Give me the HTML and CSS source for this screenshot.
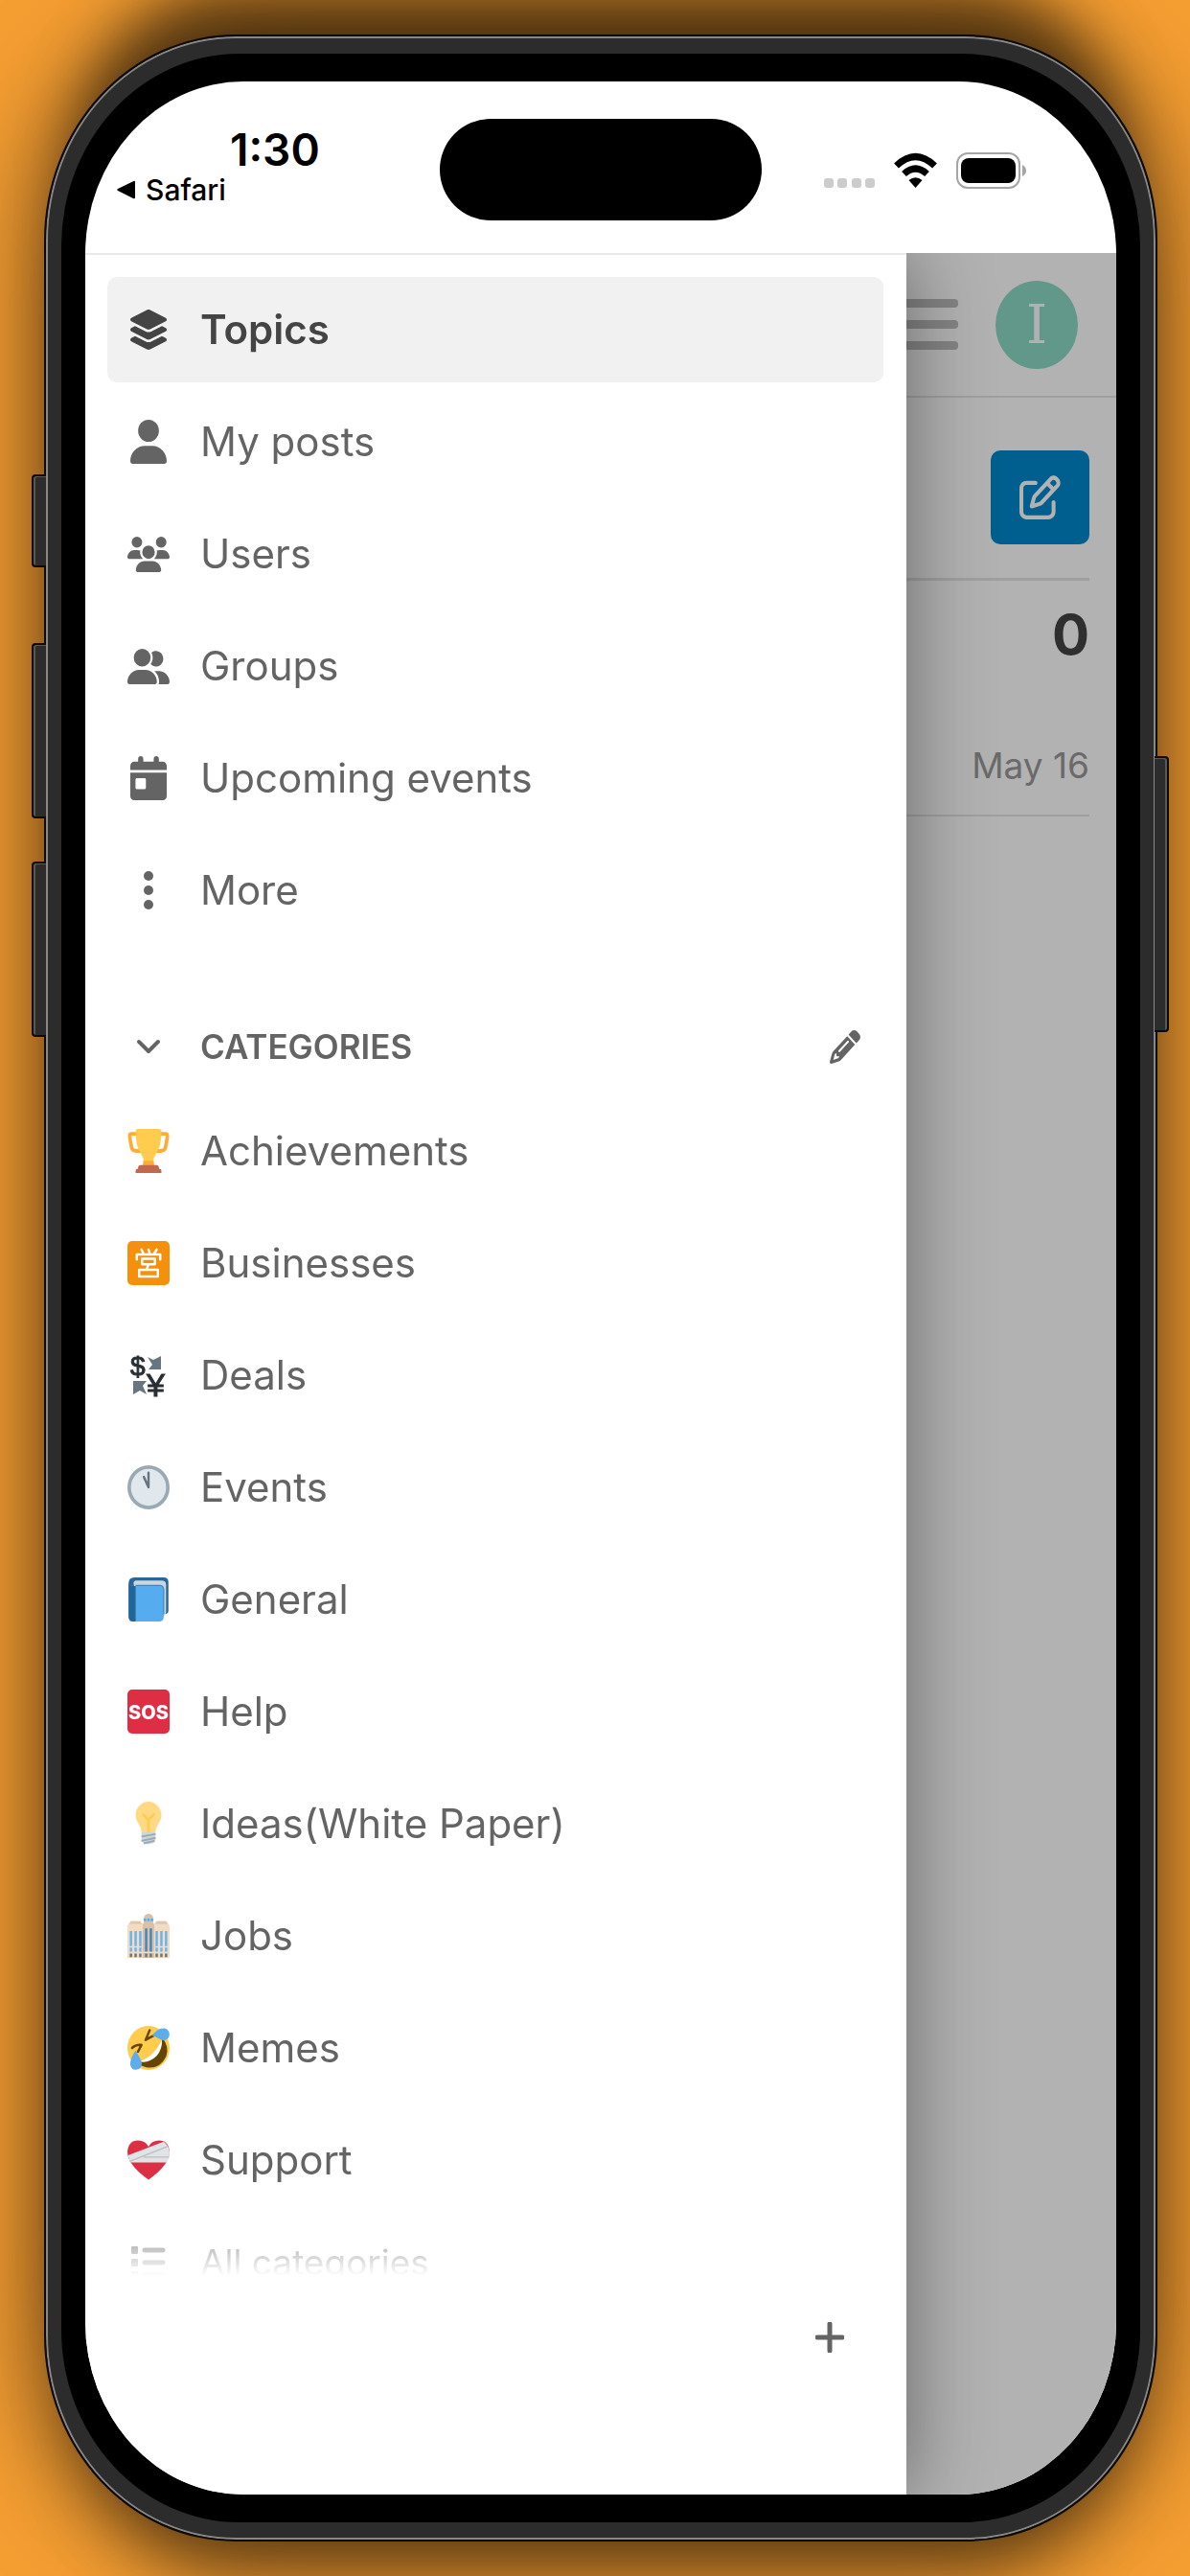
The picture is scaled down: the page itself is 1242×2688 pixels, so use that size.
FILE: index.html
```html
<!DOCTYPE html>
<html lang="en">
<head>
    <meta charset="UTF-8">
    <meta name="viewport" content="width=device-width, initial-scale=1.0">
    <title>Topics</title>
    <link rel="stylesheet" href="styles.css">
</head>
<body>
    <div class="phone">
        <span class="side-button action"></span>
        <span class="side-button volume-up"></span>
        <span class="side-button volume-down"></span>
        <span class="side-button power"></span>

        <div class="bezel">
            <div class="screen">
                <header class="status">
                    <div class="status-left">
                        <div class="time">1:30</div>
                        <a class="back" href="#">
                            <svg width="19" height="20" viewBox="0 0 19 20"><path d="M17.500 1Q19 0 19 2V18Q19 20 17 19L1 11Q-.5 10 1 9z"/></svg>
                            Safari
                        </a>
                    </div>
                    <div class="island"></div>
                    <div class="status-right">
                        <svg width="53" height="38" viewBox="0 0 53 38" fill="#ccc">
                            <rect x="0" y="27" width="10" height="10" rx="3"/>
                            <rect x="14" y="27" width="10" height="10" rx="3"/>
                            <rect x="29" y="27" width="10" height="10" rx="3"/>
                            <rect x="43" y="27" width="10" height="10" rx="3"/>
                        </svg>
                        <svg width="45" height="38" viewBox="0 0 45 38">
                            <g fill="none" stroke="#000" stroke-width="7">
                                <path d="M2.500 14Q22.500 -5 42.500 14"/>
                                <path d="M10.500 22.500Q22.500 11.500 34.500 22.500"/>
                            </g>
                            <path d="M15.500 29Q22.500 23.500 29.500 29L22.500 37z"/>
                        </svg>
                        <svg width="73" height="38" viewBox="0 0 73 38">
                            <rect x="1" y="1" width="65" height="36" rx="11" fill="none" stroke="#a5a5a5" stroke-width="2"/>
                            <rect x="5" y="6" width="57" height="26" rx="8"/>
                            <path d="M69 13Q73 15 73 19T69 25z" fill="#a5a5a5"/>
                        </svg>
                    </div>
                </header>

                <div class="app">
                    <aside class="sidebar">
                        <div class="sidebar-scroll">
                            <nav>
                                <ul class="links">
                                    <li><a class="row active" href="#">
                                        <svg class="icon" width="38" height="42" viewBox="32 0 512 512" preserveAspectRatio="none"><path d="M264.500 5.200c14.900-6.900 32.100-6.900 47 0l218.600 101c8.500 3.900 13.900 12.400 13.900 21.800s-5.400 17.900-13.900 21.800l-218.600 101c-14.900 6.900-32.100 6.900-47 0L45.900 149.800C37.400 145.800 32 137.300 32 128s5.400-17.900 13.900-21.800L264.500 5.200zM476.900 209.600l53.200 24.600c8.500 3.900 13.900 12.400 13.900 21.800s-5.400 17.900-13.900 21.800l-218.600 101c-14.900 6.900-32.100 6.900-47 0L45.900 277.800C37.400 273.800 32 265.300 32 256s5.400-17.900 13.900-21.800l53.200-24.600 152 70.200c23.400 10.800 50.400 10.800 73.800 0l152-70.200zm-152 198.200l152-70.200 53.200 24.600c8.500 3.900 13.900 12.400 13.900 21.800s-5.400 17.900-13.900 21.800l-218.600 101c-14.900 6.900-32.100 6.900-47 0L45.900 405.800C37.400 401.800 32 393.300 32 384s5.400-17.900 13.900-21.800l53.200-24.600 152 70.200c23.400 10.800 50.400 10.800 73.800 0z"/></svg>
                                        Topics
                                    </a></li>
                                    <li><a class="row" href="#">
                                        <svg class="icon" width="38" height="46" viewBox="0 0 448 512" preserveAspectRatio="none"><path d="M224 256A128 128 0 1 0 224 0a128 128 0 1 0 0 256zm-45.700 48C79.800 304 0 383.800 0 482.300C0 498.700 13.300 512 29.700 512l388.600 0c16.400 0 29.700-13.300 29.700-29.700C448 383.800 368.200 304 269.700 304l-91.400 0z"/></svg>
                                        My posts
                                    </a></li>
                                    <li><a class="row" href="#">
                                        <svg class="icon" width="44" height="37" viewBox="0 0 640 512" preserveAspectRatio="none"><path d="M144 0a80 80 0 1 1 0 160A80 80 0 1 1 144 0zM512 0a80 80 0 1 1 0 160A80 80 0 1 1 512 0zM0 298.700C0 239.800 47.800 192 106.700 192h42.700c15.900 0 31 3.500 44.600 9.700c-1.300 7.200-1.900 14.700-1.900 22.300c0 38.200 16.800 72.500 43.300 96c-.2 0-.4 0-.7 0H21.300C9.600 320 0 310.400 0 298.700zM405.300 320c-.2 0-.4 0-.7 0c26.600-23.500 43.300-57.800 43.300-96c0-7.600-.7-15-1.900-22.300c13.600-6.300 28.700-9.700 44.600-9.700h42.700C592.200 192 640 239.800 640 298.700c0 11.800-9.600 21.300-21.300 21.300H405.300zM224 224a96 96 0 1 1 192 0 96 96 0 1 1 -192 0zM128 485.300C128 411.700 187.700 352 261.300 352H378.700C452.300 352 512 411.700 512 485.300c0 14.700-11.900 26.700-26.700 26.700H154.700c-14.700 0-26.700-11.900-26.700-26.700z"/></svg>
                                        Users
                                    </a></li>
                                    <li><a class="row" href="#">
                                        <svg class="icon" width="44" height="37" viewBox="0 0 640 512" preserveAspectRatio="none"><path d="M96 128a128 128 0 1 1 256 0A128 128 0 1 1 96 128zM0 482.300C0 383.800 79.800 304 178.300 304h91.400C368.200 304 448 383.800 448 482.300c0 16.400-13.300 29.700-29.700 29.700H29.700C13.300 512 0 498.700 0 482.300zM609.300 512H471.400c5.400-9.400 8.600-20.300 8.600-32v-8c0-60.700-27.100-115.200-69.800-151.800c2.400-.1 4.700-.2 7.100-.2h61.400C567.800 320 640 392.200 640 481.300c0 17-13.800 30.700-30.700 30.700zM432 256c-31 0-59-12.600-79.300-32.900C372.400 196.500 384 163.600 384 128c0-26.800-6.600-52.100-18.300-74.300C384.300 40.100 407.200 32 432 32c61.900 0 112 50.100 112 112s-50.100 112-112 112z"/></svg>
                                        Groups
                                    </a></li>
                                    <li><a class="row" href="#">
                                        <svg class="icon" width="38" height="46" viewBox="0 0 448 512" preserveAspectRatio="none"><path d="M128 0c17.700 0 32 14.300 32 32V64H288V32c0-17.700 14.300-32 32-32s32 14.300 32 32V64h48c26.500 0 48 21.500 48 48v48H0V112C0 85.500 21.500 64 48 64H96V32c0-17.700 14.300-32 32-32zM0 192H448V464c0 26.500-21.500 48-48 48H48c-26.500 0-48-21.500-48-48V192zm80 64c-8.800 0-16 7.200-16 16v96c0 8.800 7.200 16 16 16h96c8.800 0 16-7.200 16-16V272c0-8.800-7.200-16-16-16H80z"/></svg>
                                        Upcoming events
                                    </a></li>
                                    <li><button class="row" type="button">
                                        <svg class="icon" width="10" height="40" viewBox="0 0 10 40"><circle cx="5" cy="5" r="5"/><circle cx="5" cy="20" r="5"/><circle cx="5" cy="35" r="5"/></svg>
                                        More
                                    </button></li>
                                </ul>

                                <div class="section-header">
                                    <button class="section-toggle" type="button">
                                        <svg class="icon" width="26" height="16" viewBox="0 0 26 16"><path d="M3 3L13 13L23 3" fill="none" stroke="currentColor" stroke-width="4" stroke-linecap="round" stroke-linejoin="round"/></svg>
                                        CATEGORIES
                                    </button>
                                    <button class="icon-button" type="button" aria-label="Edit categories">
                                        <svg width="32" height="35" viewBox="0 0 512 512" preserveAspectRatio="none"><path d="M410.300 231l11.300-11.300-33.900-33.900-62.100-62.100L291.700 89.800l-11.300 11.300-22.600 22.600L58.600 322.900c-10.400 10.400-18 23.300-22.200 37.400L1 480.700c-2.500 8.400-.2 17.500 6.100 23.700s15.300 8.500 23.700 6.100l120.300-35.400c14.100-4.200 27-11.800 37.400-22.200L387.700 253.700 410.300 231zM160 399.400l-9.100 22.700c-4 3.100-8.500 5.400-13.300 6.900L59.400 452l23-78.100c1.400-4.900 3.800-9.400 6.900-13.300l22.700-9.100v32c0 8.800 7.200 16 16 16h32zM362.700 18.700L348.300 33.200 325.700 55.800 314.300 67.100l33.900 33.900 62.100 62.100 33.900 33.900 11.300-11.300 22.600-22.600 14.500-14.500c25-25 25-65.500 0-90.500L453.300 18.700c-25-25-65.500-25-90.500 0zm-47.400 168l-144 144c-6.200 6.200-16.400 6.200-22.600 0s-6.200-16.400 0-22.600l144-144c6.200-6.200 16.400-6.200 22.600 0s6.200 16.400 0 22.600z"/></svg>
                                    </button>
                                </div>

                                <ul class="links">
                                    <li><a class="row" href="#">
                                        <svg class="icon" width="44" height="46" viewBox="0 0 36 36" preserveAspectRatio="none">
                                            <path d="M3 4H10L12 18H8Q4 18 3.500 15L2 7Q1.500 4 3 4zM33 4H26L24 18H28Q32 18 32.500 15L34 7Q34.500 4 33 4z" fill="none" stroke="#ffac33" stroke-width="3"/>
                                            <path d="M14 23H22L23 31H13z" fill="#ffac33"/>
                                            <path d="M9 0H27Q29 0 29 2Q29 15 24 21Q22 24 22 26H14Q14 24 12 21Q7 15 7 2Q7 0 9 0z" fill="#ffcc4d"/>
                                            <path d="M11 29.500H25Q27 29.500 27 32.500Q29 32.500 29 34V36H7V34Q7 32.500 9 32.500Q9 29.500 11 29.500z" fill="#c1694f"/>
                                        </svg>
                                        Achievements
                                    </a></li>
                                    <li><a class="row" href="#">
                                        <svg class="icon" width="44" height="46" viewBox="0 0 36 36" preserveAspectRatio="none">
                                            <rect width="36" height="36" rx="4" fill="#f4900c"/>
                                            <g fill="none" stroke="#fff" stroke-width="2" stroke-linejoin="round" stroke-linecap="round">
                                                <path d="M8 15V11H28V15M12 7L13.500 10M18 7L19 10M25 7L23 10M12.500 14.500H23.500V19H12.500zM18 19L16.500 23M10 23.500H26V29H10z"/>
                                            </g>
                                        </svg>
                                        Businesses
                                    </a></li>
                                    <li><a class="row" href="#">
                                        <svg class="icon" width="44" height="46" viewBox="0 0 44 46">
                                            <path d="M21 4L27 7L35 3V17H22L26 12zM6 29H20L16 34L20 43L13 39L6 43z" fill="#66757f"/>
                                            <text class="sign" x="3" y="23" font-size="28">$</text>
                                            <text class="sign" x="20" y="45" font-size="34">¥</text>
                                        </svg>
                                        Deals
                                    </a></li>
                                    <li><a class="row" href="#">
                                        <svg class="icon" width="44" height="46" viewBox="0 0 36 36" preserveAspectRatio="none">
                                            <circle cx="18" cy="18" r="16.500" fill="#e1e8ed" stroke="#9aaab4" stroke-width="3"/>
                                            <path d="M18 6V18L14 9.500" fill="none" stroke="#66757f" stroke-width="2" stroke-linecap="round" stroke-linejoin="round"/>
                                        </svg>
                                        Events
                                    </a></li>
                                    <li><a class="row" href="#">
                                        <svg class="icon" width="44" height="46" viewBox="0 0 36 36" preserveAspectRatio="none">
                                            <path d="M6 0H31Q35 0 35 4V27Q35 30 32 30H1V5Q1 0 6 0z" fill="#2a6797"/>
                                            <path d="M7 2.500H29Q33 2.500 33 6V29L30 33L6 8Q4 3 7 2.500z" fill="#ccd6dd"/>
                                            <path d="M1 5Q3 7 6 7H27Q31 7 31 10V32Q31 36 27 36H5Q1 36 1 32z" fill="#55acee"/>
                                            <path d="M1 5Q3 7 7 7V36H5Q1 36 1 32z" fill="#226699"/>
                                            <path d="M7 6.500H28Q31 7 31 10V30" fill="none" stroke="#3b88c3"/>
                                        </svg>
                                        General
                                    </a></li>
                                    <li><a class="row" href="#">
                                        <svg class="icon" width="44" height="46" viewBox="0 0 44 46">
                                            <rect width="44" height="46" rx="5" fill="#dd2e44"/>
                                            <text class="sos" x="22" y="31" text-anchor="middle">SOS</text>
                                        </svg>
                                        Help
                                    </a></li>
                                    <li><a class="row" href="#">
                                        <svg class="icon" width="44" height="46" viewBox="0 0 36 36" preserveAspectRatio="none">
                                            <path d="M18 0C12 0 7 5 7 11C7 17 12 19 12 25H24C24 19 29 17 29 11C29 5 24 0 18 0z" fill="#ffd983"/>
                                            <path d="M13.500 10.500L18 15L22.500 10.500M18 15V25" fill="none" stroke="#ffcc4d" stroke-width="2" stroke-linecap="round"/>
                                            <path d="M12 25H24V32L22 34H20L18 35L16 34H14L12 32z" fill="#ccd6dd"/>
                                            <path d="M12 28.500L24 26.500M12 32L24 29.500M14 34L23 32" stroke="#99aab5" stroke-width="1.500"/>
                                        </svg>
                                        Ideas(White Paper)
                                    </a></li>
                                    <li><a class="row" href="#">
                                        <svg class="icon" width="44" height="46" viewBox="0 0 36 36" preserveAspectRatio="none">
                                            <path d="M0 11Q0 8 3 8V6H11V8H13V36H0zM23 8H25V6H33V8Q36 8 36 11V36H23z" fill="#f3dcc3"/>
                                            <path d="M3 6H11L13 8.500H1zM25 6H33L35 8.500H23z" fill="#e0c7ad"/>
                                            <path d="M13 9L14 7V3Q15 0 18 0T22 3V7L23 9V36H13z" fill="#d9c0a7"/>
                                            <path d="M14 5H22" stroke="#55acee" stroke-width="2" stroke-dasharray="2 1"/>
                                            <g stroke="#66b5f0" stroke-width="2">
                                                <path d="M3 14V32M7 14V32M11 14V32M25 14V32M29 14V32M33 14V32"/>
                                                <path d="M16 12V32M20 12V32" stroke="#3b88c3"/>
                                            </g>
                                            <path d="M2 34H12M15 34H21M24 34H34" stroke="#66757f" stroke-width="3" stroke-dasharray="2 2"/>
                                            <path d="M1 27H12M24 27H35M1 31.500H35" stroke="#f3dcc3"/>
                                        </svg>
                                        Jobs
                                    </a></li>
                                    <li><a class="row" href="#">
                                        <svg class="icon" width="44" height="46" viewBox="0 0 36 36" preserveAspectRatio="none">
                                            <circle cx="18" cy="18" r="18" fill="#ffcc4d"/>
                                            <path d="M30 10Q36 17 33 25Q28 35 17 34Q11 33 9 30Q23 26 30 10z" fill="#664500"/>
                                            <path d="M29.500 11Q22 26 10 29Q18 31 25 24.500Q30 19 29.500 11z" fill="#fff"/>
                                            <path d="M19 3.500L15.500 11.500L23 7.500M4 18Q7 15 12 15.500L9 21" fill="none" stroke="#664500" stroke-width="2" stroke-linecap="round" stroke-linejoin="round"/>
                                            <path d="M21 8Q26 1 32 2Q37 4 35.500 9Q33 13 28 11Q24 8.500 21 8zM7 20Q2 27 2.500 32Q4 37 9 35.500Q13 34 12 29Q10 25 7 20z" fill="#5dadec"/>
                                        </svg>
                                        Memes
                                    </a></li>
                                    <li><a class="row" href="#">
                                        <svg class="icon" width="44" height="46" viewBox="0 0 36 36" preserveAspectRatio="none">
                                            <path d="M18 34Q0 22 0 11Q1 2 9 2Q15 2 18 7Q21 2 27 2Q35 2 36 11Q36 22 18 34z" fill="#dd2e44"/>
                                            <path d="M.5 14L31 3Q36 7 36 12Q36 17 33 20H3Q1 17 .5 14z" fill="#e1e4e6"/>
                                            <path d="M2 19L34 7M14 15.500H35.500" stroke="#b9bec2" fill="none"/>
                                        </svg>
                                        Support
                                    </a></li>
                                </ul>
                                <a class="row all-categories" href="#">
                                    <svg class="icon" width="36" height="34" viewBox="0 0 36 34">
                                        <path d="M1 1h5v6h-5zM1 14h5v6h-5zM1 27h5v6h-5z" stroke="currentColor" stroke-width="2" stroke-linejoin="round"/>
                                        <path d="M14 4H33M14 17H33M14 30H33" stroke="currentColor" stroke-width="5" stroke-linecap="round"/>
                                    </svg>
                                    All categories
                                </a>
                            </nav>
                        </div>
                        <footer class="sidebar-footer">
                            <button class="icon-button" type="button" aria-label="Add section">
                                <svg width="30" height="32" viewBox="0 0 30 32"><path d="M15 2V30M2 16H28" stroke="currentColor" stroke-width="5" stroke-linecap="round"/></svg>
                            </button>
                        </footer>
                    </aside>

                    <main class="page">
                        <div class="topbar">
                            <button class="menu" type="button" aria-label="Menu">
                                <svg width="64" height="54" viewBox="0 0 64 54" fill="#bdbdbd">
                                    <rect width="64" height="9" rx="4"/><rect y="22" width="64" height="9" rx="4"/><rect y="44" width="64" height="9" rx="4"/>
                                </svg>
                            </button>
                            <a class="avatar" href="#">I</a>
                        </div>
                        <div class="content">
                            <div class="controls">
                                <button class="compose" type="button" aria-label="New topic">
                                    <svg width="43" height="46" viewBox="0 0 512 512" preserveAspectRatio="none"><path d="M441 58.900L453.100 71c9.400 9.400 9.400 24.600 0 33.900L424 134.100 377.900 88 407 58.900c9.400-9.400 24.600-9.400 33.900 0zM209.800 256.200L344 121.900 390.100 168 255.800 302.200c-2.900 2.900-6.500 5-10.400 6.100l-58.500 16.700 16.700-58.500c1.100-3.900 3.200-7.500 6.100-10.400zM373.100 25L175.800 222.200c-8.700 8.700-15 19.400-18.300 31.100l-28.600 100c-2.400 8.400-.1 17.400 6.100 23.600s15.200 8.500 23.600 6.100l100-28.600c11.800-3.400 22.500-9.700 31.100-18.300L487 138.900c28.100-28.100 28.100-73.700 0-101.800L474.900 25C446.800-3.100 401.200-3.100 373.100 25zM88 64C39.400 64 0 103.400 0 152V424c0 48.600 39.400 88 88 88H360c48.600 0 88-39.400 88-88V312c0-13.300-10.700-24-24-24s-24 10.700-24 24V424c0 22.100-17.900 40-40 40H88c-22.100 0-40-17.900-40-40V152c0-22.100 17.900-40 40-40H200c13.300 0 24-10.700 24-24s-10.700-24-24-24H88z"/></svg>
                                </button>
                            </div>
                            <div class="topic">
                                <span class="replies">0</span>
                                <span class="date">May 16</span>
                            </div>
                        </div>
                    </main>
                </div>
            </div>
        </div>
    </div>
</body>
</html>
```
FILE: styles.css
```css
* {
    box-sizing: border-box;
}

body {
    margin: 0;
    padding: 36px 34px 36px 46px;
    min-height: 100vh;
    display: flex;
    background-color: #f59e32;
    font-family: Inter, "Liberation Sans", sans-serif;
    font-size: 42px;
    color: #646464;
    overflow-x: hidden;
}

a {
    color: inherit;
    text-decoration: none;
}

button {
    padding: 0;
    border: none;
    background: none;
    font: inherit;
    color: inherit;
    cursor: pointer;
}

ul {
    margin: 0;
    padding: 0;
    list-style: none;
}

svg {
    display: block;
    flex: none;
}

.icon-button svg, .icon {
    fill: currentColor;
}

/* phone body */
.phone {
    position: relative;
    flex: 1;
    display: flex;
    padding: 18px 16px;
    border: 2px solid #0c0a08;
    border-radius: 200px / 215px;
    background-color: #2c2c2c;
    box-shadow:
        inset 0 0 0 2px #8a8785,
        0 0 110px rgba(0, 0, 0, 0.62),
        0 -90px 60px -40px rgba(0, 0, 0, 0.5),
        0 70px 70px -40px rgba(0, 0, 0, 0.4);
}

.side-button {
    position: absolute;
    left: -15px;
    width: 15px;
    border: 2px solid #0c0a08;
    border-right: none;
    border-radius: 4px 0 0 4px;
    background-color: #2c2c2c;
    box-shadow: inset 2px 1px 0 #5a5856;
}

.action {
    top: 457px;
    height: 97px;
}

.volume-up {
    top: 633px;
    height: 183px;
}

.volume-down {
    top: 861px;
    height: 183px;
}

.power {
    left: auto;
    right: -14px;
    top: 751px;
    height: 288px;
    border: 2px solid #0c0a08;
    border-left: none;
    border-radius: 0 4px 4px 0;
    box-shadow: inset -2px 1px 0 #5a5856;
}

.bezel {
    flex: 1;
    display: flex;
    padding: 29px 25px;
    border-radius: 186px / 201px;
    background-color: black;
}

.screen {
    flex: 1;
    min-width: 0;
    display: flex;
    flex-direction: column;
    border-radius: 165px / 180px;
    background-color: white;
    overflow: hidden;
}

/* status bar */
.status {
    display: grid;
    grid-template-columns: 1fr auto 1fr;
    min-height: 179px;
    color: black;
}

.status-left {
    padding: 43px 0 0 33px;
}

.time {
    padding-left: 118px;
    font-size: 46px;
    font-weight: 600;
    line-height: 56px;
}

.back {
    display: flex;
    align-items: center;
    gap: 11px;
    font-size: 30px;
    font-weight: 500;
    line-height: 28px;
}

.island {
    width: 336px;
    height: 106px;
    margin-top: 39px;
    border-radius: 53px;
    background-color: black;
}

.status-right {
    display: flex;
    justify-content: flex-end;
    gap: 20px;
    padding: 74px 94px 0 0;
}

/* sidebar */
.app {
    flex: 1;
    display: grid;
    grid-template-columns: 1fr 219px;
    overflow: hidden;
}

.sidebar {
    position: relative;
    z-index: 1;
    display: flex;
    flex-direction: column;
    border-top: 2px solid #e9e9e9;
    background-color: white;
    box-shadow: 0 0 80px rgba(0, 0, 0, 0.43);
}

.sidebar-scroll {
    flex: 1 1 0;
    min-height: 0;
    padding: 23px 24px 0 23px;
    overflow: hidden;
    mask-image: linear-gradient(to top, transparent, black 75px);
}

.links {
    display: flex;
    flex-direction: column;
    gap: 7px;
}

/* icons differ in width, so each one is centred in the same 44px column */
.row, .section-toggle {
    display: grid;
    grid-template-columns: 44px 1fr;
    align-items: center;
    column-gap: 32px;
    padding-left: 21px;
    text-align: left;
}

.row {
    width: 100%;
    height: 110px;
    border-radius: 10px;
    line-height: 56px;
}

.row.active {
    background-color: #f1f1f1;
    color: #444;
    font-weight: 600;
}

.icon {
    margin: 0 auto;
}

.section-header {
    display: flex;
    align-items: center;
    justify-content: space-between;
    height: 108px;
    margin-top: 54px;
    padding-right: 24px;
}

.section-toggle {
    font-size: 35px;
    font-weight: 600;
}

.all-categories {
    height: 104px;
    font-size: 37px;
}

.sidebar-footer {
    display: flex;
    align-items: flex-start;
    justify-content: flex-end;
    height: 228px;
    padding: 48px 65px 0 0;
}

.sign {
    font-family: "Liberation Sans", sans-serif;
    fill: #292f33;
    stroke: #292f33;
    stroke-width: 1px;
}

.sos {
    font-size: 20px;
    font-weight: 800;
    fill: white;
}

/* page behind the sidebar */
.page {
    position: relative;
    min-width: 0;
    background-color: white;
}

.page::after {
    content: "";
    position: absolute;
    inset: 0;
    background-color: rgba(0, 0, 0, 0.3);
}

.topbar {
    display: flex;
    align-items: center;
    justify-content: flex-end;
    gap: 39px;
    height: 151px;
    padding-right: 40px;
    border-bottom: 2px solid #e4e4e4;
}

.avatar {
    flex: none;
    width: 86px;
    height: 92px;
    border-radius: 50%;
    background-color: #8ddac5;
    color: #fefefe;
    font-family: "DejaVu Serif", serif;
    font-size: 56px;
    line-height: 92px;
    text-align: center;
}

.content {
    padding-right: 28px;
}

.controls {
    display: flex;
    justify-content: flex-end;
    padding: 55px 0 35px;
    border-bottom: 3px solid #e4e4e4;
}

.compose {
    display: grid;
    place-items: center;
    width: 103px;
    height: 98px;
    border-radius: 10px;
    background-color: #08c;
    fill: white;
}

.topic {
    display: flex;
    flex-direction: column;
    align-items: flex-end;
    gap: 70px;
    padding: 20px 0;
    border-bottom: 2px solid #e4e4e4;
}

.replies {
    font-size: 58px;
    font-weight: 700;
    line-height: 72px;
    color: #444;
}

.date {
    font-size: 37px;
    line-height: 62px;
    color: #999;
}
```
